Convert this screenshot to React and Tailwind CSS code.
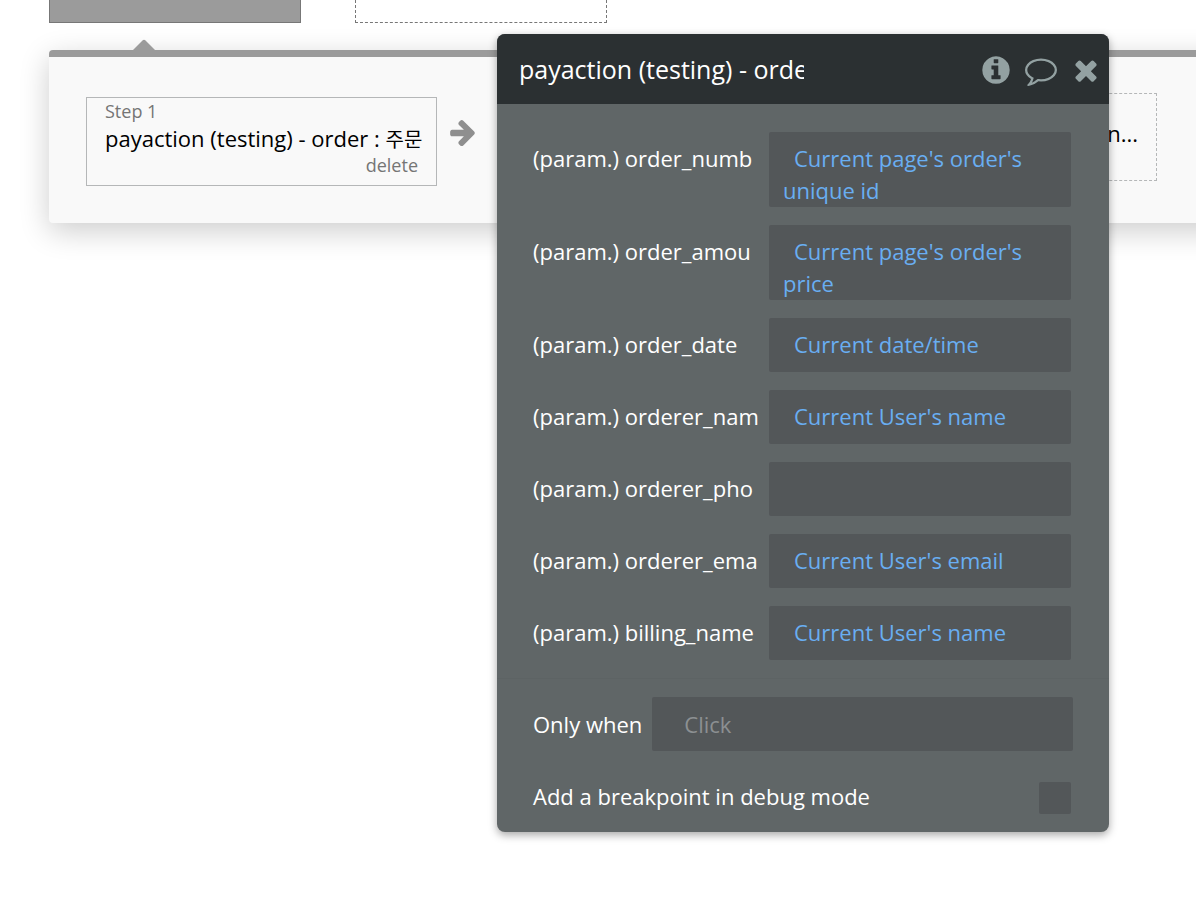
/**
 * Workflow Editor
 * Step strip with the property editor popup of the selected action
 */

import { useState } from 'react';

const PARAMS = [
  { id: 'order_number', label: '(param.) order_numb', value: "Current page's order's unique id", rows: 2 },
  { id: 'order_amount', label: '(param.) order_amou', value: "Current page's order's price", rows: 2 },
  { id: 'order_date', label: '(param.) order_date', value: 'Current date/time', rows: 1 },
  { id: 'orderer_name', label: '(param.) orderer_nam', value: "Current User's name", rows: 1 },
  { id: 'orderer_phone', label: '(param.) orderer_pho', value: '', rows: 1 },
  { id: 'orderer_email', label: '(param.) orderer_ema', value: "Current User's email", rows: 1 },
  { id: 'billing_name', label: '(param.) billing_name', value: "Current User's name", rows: 1 }
];

const ICONS = {
  info: 'M1152 1376v-160q0-14-9-23t-23-9h-96v-512q0-14-9-23t-23-9h-320q-14 0-23 9t-9 23v160q0 14 9 23t23 9h96v320h-96q-14 0-23 9t-9 23v160q0 14 9 23t23 9h448q14 0 23-9t9-23zm-128-896v-160q0-14-9-23t-23-9h-192q-14 0-23 9t-9 23v160q0 14 9 23t23 9h192q14 0 23-9t9-23zm640 416q0 209-103 385.5t-279.5 279.5-385.5 103-385.5-103-279.5-279.5-103-385.5 103-385.5 279.5-279.5 385.5-103 385.5 103 279.5 279.5 103 385.5z',
  comment: 'M896 384q-204 0-381.5 69.5t-282 187.5-104.5 255q0 112 71.5 213.5t201.5 175.5l87 50-27 96q-24 91-70 172 152-63 275-171l43-38 57 6q69 8 130 8 204 0 381.5-69.5t282-187.5 104.5-255-104.5-255-282-187.5-381.5-69.5zm896 512q0 174-120 321.5t-326 233-450 85.5q-70 0-145-8-198 175-460 242-49 14-114 22h-5q-15 0-27-10.5t-16-27.5v-1q-3-4-.5-12t2-10 4.5-9.5l6-9 7-8.5 8-9q7-8 31-34.5t34.5-38 31-39.5 32.5-51 27-59 26-76q-157-89-247.5-220t-90.5-281q0-174 120-321.5t326-233 450-85.5 450 85.5 326 233 120 321.5z',
  close: 'M1490 1322q0 40-28 68l-136 136q-28 28-68 28t-68-28l-294-294-294 294q-28 28-68 28t-68-28l-136-136q-28-28-28-68t28-68l294-294-294-294q-28-28-28-68t28-68l136-136q28-28 68-28t68 28l294 294 294-294q28-28 68-28t68 28l136 136q28 28 28 68t-28 68l-294 294 294 294q28 28 28 68z',
  arrow: 'M1600 960q0 54-37 91l-651 651q-39 37-91 37-51 0-90-37l-75-75q-38-38-38-91t38-91l293-293h-704q-52 0-84.5-37.5t-32.5-90.5v-128q0-53 32.5-90.5t84.5-37.5h704l-293-294q-38-36-38-90t38-90l75-75q38-38 90-38 53 0 91 38l651 651q37 35 37 90z'
};

function Icon({ name, className }) {
  return (
    <svg viewBox="0 0 1792 1792" fill="currentColor" className={className} aria-hidden="true">
      <path d={ICONS[name]} />
    </svg>
  );
}

function ParamRow({ param, value, onChange }) {
  return (
    <div className="flex items-start justify-between">
      <label htmlFor={param.id} className="pt-[10px] leading-8 whitespace-nowrap">
        {param.label}
      </label>
      <textarea
        id={param.id}
        name={param.id}
        value={value}
        onChange={onChange}
        rows={param.rows}
        className={`w-[302px] resize-none overflow-hidden rounded-xs bg-[#535759] pt-[10px] px-[14px] indent-[11px] leading-8 text-[#69aef2] outline-none ${
          param.rows === 2 ? 'h-[75px]' : 'h-[54px]'
        }`}
      />
    </div>
  );
}

function PropertyEditor() {
  const [title, setTitle] = useState('payaction (testing) - order : 주문');
  const [condition, setCondition] = useState('');
  const [breakpoint, setBreakpoint] = useState(false);
  const [values, setValues] = useState(
    Object.fromEntries(PARAMS.map((param) => [param.id, param.value]))
  );

  const handleChange = (e) => {
    setValues({
      ...values,
      [e.target.name]: e.target.value
    });
  };

  return (
    <section className="absolute left-[497px] top-[34px] w-[612px] overflow-hidden rounded-lg bg-[#606667] text-[22px] text-white shadow-[0_3px_8px_rgba(0,0,0,0.35)]">
      {/* Title bar */}
      <header className="flex h-[70px] items-center justify-between bg-[#2b3032] pt-[2px] pl-[22px] pr-[7px]">
        <input
          type="text"
          aria-label="Action name"
          value={title}
          onChange={(e) => setTitle(e.target.value)}
          className="w-[285px] bg-transparent text-[25px] outline-none"
        />
        <div className="flex gap-[13px] text-[#93a1a2]">
          <button type="button" aria-label="Info">
            <Icon name="info" className="size-8" />
          </button>
          <button type="button" aria-label="Comment">
            <Icon name="comment" className="size-8" />
          </button>
          <button type="button" aria-label="Close">
            <Icon name="close" className="size-8" />
          </button>
        </div>
      </header>

      {/* Parameters */}
      <div className="flex flex-col gap-[18px] border-b border-[#5d6364] pt-7 pb-[18px] pl-9 pr-[38px]">
        {PARAMS.map((param) => (
          <ParamRow key={param.id} param={param} value={values[param.id]} onChange={handleChange} />
        ))}
      </div>

      {/* Condition and debugging */}
      <div className="flex items-center gap-[10px] pt-[18px] pl-9 pr-9">
        <label htmlFor="condition" className="whitespace-nowrap">
          Only when
        </label>
        <input
          id="condition"
          type="text"
          value={condition}
          placeholder="Click"
          onChange={(e) => setCondition(e.target.value)}
          className="h-[54px] min-w-0 flex-1 rounded-xs bg-[#535759] px-8 text-[#69aef2] placeholder:text-[#8c9092] outline-none"
        />
      </div>
      <div className="flex items-start justify-between pt-[31px] pb-[18px] pl-9 pr-[38px]">
        <label htmlFor="breakpoint" className="leading-7">
          Add a breakpoint in debug mode
        </label>
        <input
          id="breakpoint"
          type="checkbox"
          checked={breakpoint}
          onChange={(e) => setBreakpoint(e.target.checked)}
          className="size-8 appearance-none rounded-xs bg-[#535759] checked:bg-[#69aef2]"
        />
      </div>
    </section>
  );
}

export default function App() {
  return (
    <main className="relative min-h-screen overflow-hidden bg-white font-['Open_Sans','Noto_Sans_CJK_KR',sans-serif]">
      {/* Events */}
      <div className="flex gap-[54px] pl-[49px]">
        <div className="h-[23px] w-[252px] border border-t-0 border-[#777777] bg-[#9b9b9b]" />
        <div className="h-[23px] w-[252px] border border-t-0 border-dashed border-[#777777]" />
      </div>

      {/* Actions of the selected event, the strip runs on past the right edge */}
      <div className="relative mt-[27px] -mr-10 ml-[49px] flex items-start rounded-sm border-t-[7px] border-[#9b9b9b] bg-[#f9f9f9] pt-9 pr-[79px] pb-[37px] pl-[37px] shadow-[0_8px_30px_rgba(0,0,0,0.2)]">
        <svg
          viewBox="0 0 24 12"
          className="absolute -top-[18px] left-[83px] h-3 w-6 text-[#9b9b9b]"
          aria-hidden="true"
        >
          <path d="M0 12 10.500 1.500Q12 0 13.500 1.500L24 12Z" fill="currentColor" />
        </svg>
        <div className="mt-1 h-[89px] w-[351px] border border-[#b5b7b8] px-[18px] text-lg leading-[27px] text-[#757575]">
          <p>Step 1</p>
          <p className="text-[22px] whitespace-nowrap text-black">
            payaction (testing) - order : <span className="text-xl leading-none">주문</span>
          </p>
          <button type="button" className="block w-full text-right">
            delete
          </button>
        </div>
        <Icon name="arrow" className="mt-6 ml-[11px] size-[30px] text-[#8f8f8f]" />
        <button
          type="button"
          className="ml-auto h-[88px] w-[351px] border border-dashed border-[#b5b7b8] px-[18px] pb-2 text-right text-[22px] whitespace-nowrap text-black"
        >
          Click here to add an action...
        </button>
      </div>

      <PropertyEditor />
    </main>
  );
}
